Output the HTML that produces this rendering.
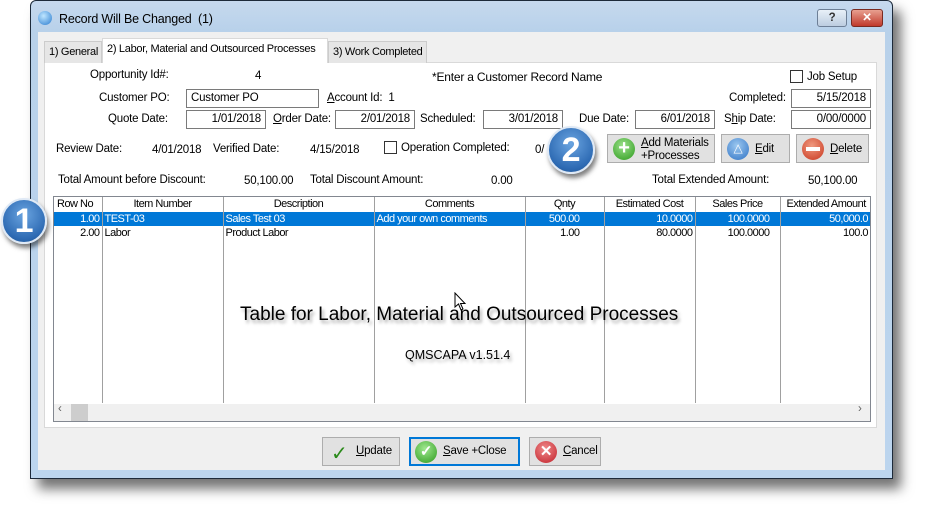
<!DOCTYPE html>
<html><head><style>
*{box-sizing:border-box;margin:0;padding:0}
body{width:926px;height:512px;background:#fff;position:relative;overflow:hidden;font-family:"Liberation Sans",sans-serif;font-size:11.5px;color:#000;letter-spacing:-0.2px}
.a{position:absolute;white-space:nowrap}
.win{left:30px;top:0;width:863px;height:479px;background:linear-gradient(#c6d9ee,#b8d1ea 30px,#bcd5ee);border:1px solid #1d2a3a;box-shadow:8px 10px 12px rgba(0,0,0,.55);border-radius:6px 6px 0 0}
.client{left:38px;top:32px;width:847px;height:438px;background:#f0f0f0}
.panel{left:44px;top:62px;width:833px;height:366px;background:#fff;border:1px solid #d9d9d9}
.tab{top:40px;height:22px;background:#e6e6e6;border:1px solid #ccc;border-bottom:none;padding:4px 4px 0;white-space:nowrap;overflow:hidden;font-size:11px;letter-spacing:-0.3px}
.inp{height:19px;border:1px solid #7a7a7a;background:#fff;padding:2px 4px 0;text-align:right}
.btn{background:#e1e1e1;border:1px solid #adadad}
table{border-collapse:collapse;font-size:11px;letter-spacing:-0.5px;position:absolute;left:54px;top:197px;width:816px;table-layout:fixed}
td{border-left:1px solid #a0a0a0;height:14px;line-height:14px;padding:0 2px;white-space:nowrap;overflow:hidden}
th{font-weight:normal;height:15px;line-height:15px;border-left:1px solid #a0a0a0;white-space:nowrap;overflow:hidden}
tr.sel td{background:#0078d7;color:#fff}
.r{text-align:right}
.badge{border-radius:50%;background:radial-gradient(circle at 50% 35%,#6aa4e0,#2d6ab3 70%,#1e4f8a);border:2px solid #dfe9f5;box-shadow:2px 4px 5px rgba(0,0,0,.5);color:#fff;font-weight:bold;font-size:34px;text-align:center}
u{text-decoration:underline}
</style></head><body>
<div class="a win"></div>
<div class="a" style="left:38px;top:11px;width:14px;height:14px;border-radius:50%;background:radial-gradient(circle at 40% 35%,#bfe6ff,#2a7cd0)"></div>
<div class="a" style="left:59px;top:12px;font-size:12.5px">Record Will Be Changed&nbsp; (1)</div>
<div class="a" style="left:817px;top:9px;width:30px;height:18px;border:1px solid #6d7f96;border-radius:3px;background:linear-gradient(#e8f0f8,#bccde0);text-align:center;font-weight:bold;color:#333;line-height:16px">?</div>
<div class="a" style="left:851px;top:9px;width:32px;height:18px;border:1px solid #7a2a20;border-radius:3px;background:linear-gradient(#e8a090,#c0392b);text-align:center;font-weight:bold;color:#fff;line-height:16px">✕</div>
<div class="a client"></div>
<div class="a panel"></div>
<div class="a tab" style="left:44px;width:58px;top:41px">1) General</div>
<div class="a tab" style="left:102px;width:226px;top:38px;height:25px;background:#fff;border-color:#d9d9d9">2) Labor, Material and Outsourced Processes</div>
<div class="a tab" style="left:328px;width:99px;top:41px">3) Work Completed</div>

<div class="a" style="left:90px;top:69px">Opportunity Id#:</div>
<div class="a" style="left:255px;top:70px">4</div>
<div class="a" style="left:432px;top:70px;font-size:12px">*Enter a Customer Record Name</div>
<div class="a" style="left:790px;top:70px;width:13px;height:13px;border:1px solid #333;background:#fff"></div>
<div class="a" style="left:807px;top:71px">Job Setup</div>

<div class="a" style="left:99px;top:92px">Customer PO:</div>
<div class="a inp" style="left:186px;top:89px;width:133px;text-align:left">Customer PO</div>
<div class="a" style="left:327px;top:92px"><u>A</u>ccount Id:&nbsp; 1</div>
<div class="a" style="left:729px;top:92px">Completed:</div>
<div class="a inp" style="left:791px;top:89px;width:80px">5/15/2018</div>

<div class="a" style="left:108px;top:113px">Quote Date:</div>
<div class="a inp" style="left:186px;top:110px;width:80px">1/01/2018</div>
<div class="a" style="left:273px;top:113px"><u>O</u>rder Date:</div>
<div class="a inp" style="left:335px;top:110px;width:80px">2/01/2018</div>
<div class="a" style="left:420px;top:113px">Scheduled:</div>
<div class="a inp" style="left:483px;top:110px;width:80px">3/01/2018</div>
<div class="a" style="left:579px;top:113px">Due Date:</div>
<div class="a inp" style="left:635px;top:110px;width:80px">6/01/2018</div>
<div class="a" style="left:724px;top:113px">S<u>h</u>ip Date:</div>
<div class="a inp" style="left:791px;top:110px;width:80px">0/00/0000</div>

<div class="a" style="left:56px;top:143px">Review Date:</div>
<div class="a" style="left:152px;top:144px">4/01/2018</div>
<div class="a" style="left:213px;top:143px">Verified Date:</div>
<div class="a" style="left:310px;top:144px">4/15/2018</div>
<div class="a" style="left:384px;top:141px;width:13px;height:13px;border:1px solid #333;background:#fff"></div>
<div class="a" style="left:401px;top:142px">Operation Completed:</div>
<div class="a" style="left:535px;top:144px">0/</div>

<div class="a btn" style="left:607px;top:134px;width:108px;height:29px"></div>
<div class="a" style="left:613px;top:138px;width:22px;height:22px;border-radius:50%;background:radial-gradient(circle at 45% 35%,#9be08a,#2c9a1c);color:#fff;font-weight:bold;font-size:20px;line-height:21px;text-align:center">+</div>
<div class="a" style="left:641px;top:137px;line-height:13px"><u>A</u>dd Materials<br>+Processes</div>
<div class="a btn" style="left:721px;top:134px;width:69px;height:29px"></div>
<div class="a" style="left:727px;top:138px;width:22px;height:22px;border-radius:50%;background:radial-gradient(circle at 45% 35%,#9cc8f0,#2f72c4);color:#fff;font-size:12px;line-height:21px;text-align:center">△</div>
<div class="a" style="left:755px;top:143px"><u>E</u>dit</div>
<div class="a btn" style="left:796px;top:134px;width:73px;height:29px"></div>
<div class="a" style="left:802px;top:138px;width:22px;height:22px;border-radius:50%;background:radial-gradient(circle at 45% 35%,#f09a80,#c8361e)"><div class="a" style="left:4px;top:9px;width:14px;height:4px;background:#fff"></div></div>
<div class="a" style="left:830px;top:143px"><u>D</u>elete</div>

<div class="a" style="left:58px;top:174px">Total Amount before Discount:</div>
<div class="a" style="left:244px;top:175px">50,100.00</div>
<div class="a" style="left:310px;top:174px">Total Discount Amount:</div>
<div class="a" style="left:491px;top:175px">0.00</div>
<div class="a" style="left:652px;top:174px">Total Extended Amount:</div>
<div class="a" style="left:808px;top:175px">50,100.00</div>

<div class="a" style="left:53px;top:196px;width:818px;height:226px;border:1px solid #828790;background:#fff"></div>
<table>
<colgroup><col style="width:48px"><col style="width:121px"><col style="width:151px"><col style="width:151px"><col style="width:79px"><col style="width:91px"><col style="width:85px"><col style="width:90px"></colgroup>
<tr><th style="text-align:left;padding-left:3px;border-left:none">Row No</th><th>Item Number</th><th>Description</th><th>Comments</th><th>Qnty</th><th>Estimated Cost</th><th>Sales Price</th><th style="text-align:left;padding-left:6px">Extended Amount</th></tr>
<tr class="sel"><td class="r" style="border-left:none">1.00</td><td>TEST-03</td><td>Sales Test 03</td><td>Add your own comments</td><td class="r" style="padding-right:24px">500.00</td><td class="r">10.0000</td><td class="r" style="padding-right:10px">100.0000</td><td class="r">50,000.0</td></tr>
<tr><td class="r" style="border-left:none">2.00</td><td>Labor</td><td>Product Labor</td><td></td><td class="r" style="padding-right:24px">1.00</td><td class="r">80.0000</td><td class="r" style="padding-right:10px">100.0000</td><td class="r">100.0</td></tr>
<tr><td style="height:163px;border-left:none"></td><td></td><td></td><td></td><td></td><td></td><td></td><td></td></tr>
</table>
<div class="a" style="left:54px;top:404px;width:816px;height:17px;background:#f0f0f0"></div>
<div class="a" style="left:71px;top:404px;width:17px;height:17px;background:#cdcdcd"></div>
<div class="a" style="left:58px;top:403px;color:#606060">‹</div>
<div class="a" style="left:858px;top:403px;color:#606060">›</div>
<div class="a" style="left:240px;top:304px;font-size:19px;letter-spacing:0;text-shadow:2px 3px 3px rgba(0,0,0,.35)">Table for Labor, Material and Outsourced Processes</div>
<div class="a" style="left:405px;top:348px;font-size:12.5px;letter-spacing:0;text-shadow:2px 3px 3px rgba(0,0,0,.3)">QMSCAPA v1.51.4</div>
<svg class="a" style="left:454px;top:292px" width="14" height="20"><path d="M1 1 L1 15 L4.5 12 L7 18 L9 17 L6.5 11.5 L11 11.5 Z" fill="#fff" stroke="#000"/></svg>

<div class="a btn" style="left:322px;top:437px;width:78px;height:29px"></div>
<div class="a" style="left:331px;top:441px;color:#2a8a1a;font-size:20px">✓</div>
<div class="a" style="left:356px;top:445px"><u>U</u>pdate</div>
<div class="a btn" style="left:409px;top:437px;width:111px;height:29px;border:2px solid #0078d7"></div>
<div class="a" style="left:415px;top:441px;width:22px;height:22px;border-radius:50%;background:radial-gradient(circle at 45% 35%,#a0e890,#2c9a1c);color:#fff;font-weight:bold;font-size:15px;line-height:22px;text-align:center">✓</div>
<div class="a" style="left:443px;top:445px"><u>S</u>ave +Close</div>
<div class="a btn" style="left:529px;top:437px;width:72px;height:29px"></div>
<div class="a" style="left:535px;top:441px;width:22px;height:22px;border-radius:50%;background:radial-gradient(circle at 45% 35%,#f08a8a,#c0202a);color:#fff;font-weight:bold;font-size:15px;line-height:22px;text-align:center">✕</div>
<div class="a" style="left:563px;top:445px"><u>C</u>ancel</div>

<div class="a badge" style="left:1px;top:198px;width:46px;height:46px;line-height:42px">1</div>
<div class="a badge" style="left:547px;top:126px;width:48px;height:48px;line-height:44px">2</div>
</body></html>
